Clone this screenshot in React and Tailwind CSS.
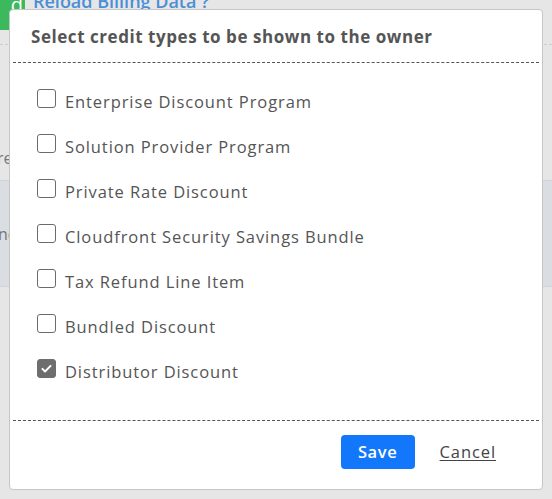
import React, { useState } from "react";

const creditTypes = [
  "Enterprise Discount Program",
  "Solution Provider Program",
  "Private Rate Discount",
  "Cloudfront Security Savings Bundle",
  "Tax Refund Line Item",
  "Bundled Discount",
  "Distributor Discount",
];

function Checkbox({ checked, onChange }) {
  return (
    <button
      onClick={onChange}
      className={`w-[19px] h-[19px] flex-shrink-0 rounded-[3px] border-[1.5px] flex items-center justify-center ${
        checked ? "bg-[#6e6e6e] border-[#6e6e6e]" : "bg-white border-[#6b6b6b]"
      }`}
    >
      {checked && (
        <svg viewBox="0 0 16 16" className="w-[13px] h-[13px]">
          <path
            d="M3 8.5l3.2 3.2L13 4.8"
            fill="none"
            stroke="white"
            strokeWidth="2.4"
            strokeLinecap="round"
            strokeLinejoin="round"
          />
        </svg>
      )}
    </button>
  );
}

export default function App() {
  const [selected, setSelected] = useState(["Distributor Discount"]);

  const toggle = (name) =>
    setSelected((s) =>
      s.includes(name) ? s.filter((x) => x !== name) : [...s, name]
    );

  return (
    <div
      className="relative w-[552px] h-[499px] overflow-hidden bg-[#e6e6e6]"
      style={{ fontFamily: '"Open Sans", "Liberation Sans", sans-serif' }}
    >
      {/* Page behind the modal */}
      <div className="flex items-start gap-2 -mt-[10px] h-[40px]">
        <div className="w-[25px] h-[40px] bg-[#3cb95c] text-white text-[20px] leading-[30px] text-right pr-[2px]">
          d
        </div>
        <span className="text-[#4a8fd6] text-[18px] font-semibold leading-[20px] mt-[1px]">
          Reload Billing Data ?
        </span>
      </div>
      <div className="border-t border-dashed border-[#cfcfcf] mt-[14px]"></div>
      <div className="h-[135px] flex items-end pb-[12px] text-[#777] text-[16px] leading-[20px]">
        <span className="-ml-[3px]">re</span>
      </div>
      <div className="h-[107px] bg-[#dadde1] border-y border-[#cfd2d6] flex items-center text-[#777] text-[16px]">
        <span className="-ml-[2px]">nd</span>
      </div>

      {/* Modal */}
      <div className="absolute left-[9px] top-[9px] w-[534px] h-[481px] bg-white border border-[#c6c6c6] rounded-[4px] flex flex-col">
        <div className="h-[52px] flex items-center pl-[21px] pt-[2px]">
          <h2 className="text-[17px] font-bold text-[#555] tracking-[0.55px]">
            Select credit types to be shown to the owner
          </h2>
        </div>
        <div className="mx-[3px] border-t border-dashed border-[#555]"></div>

        <div className="flex flex-col pt-[26px] pl-[27px] h-[357px]">
          {creditTypes.map((name) => (
            <label
              key={name}
              className="h-[45px] flex items-start gap-[9px] cursor-pointer"
            >
              <Checkbox
                checked={selected.includes(name)}
                onChange={() => toggle(name)}
              />
              <span className="text-[16.5px] text-[#555] leading-[20px] mt-[3px] tracking-[0.9px]">
                {name}
              </span>
            </label>
          ))}
        </div>

        <div className="mx-[3px] border-t border-dashed border-[#555]"></div>

        <div className="flex items-center justify-end gap-[25px] pr-[46px] pt-[14px]">
          <button className="w-[74px] h-[34px] rounded-[4px] bg-[#1277fb] text-white text-[16.5px] font-semibold tracking-[0.6px]">
            Save
          </button>
          <button className="text-[16.5px] text-[#444] underline underline-offset-2 tracking-[0.9px]">
            Cancel
          </button>
        </div>
      </div>
    </div>
  );
}
